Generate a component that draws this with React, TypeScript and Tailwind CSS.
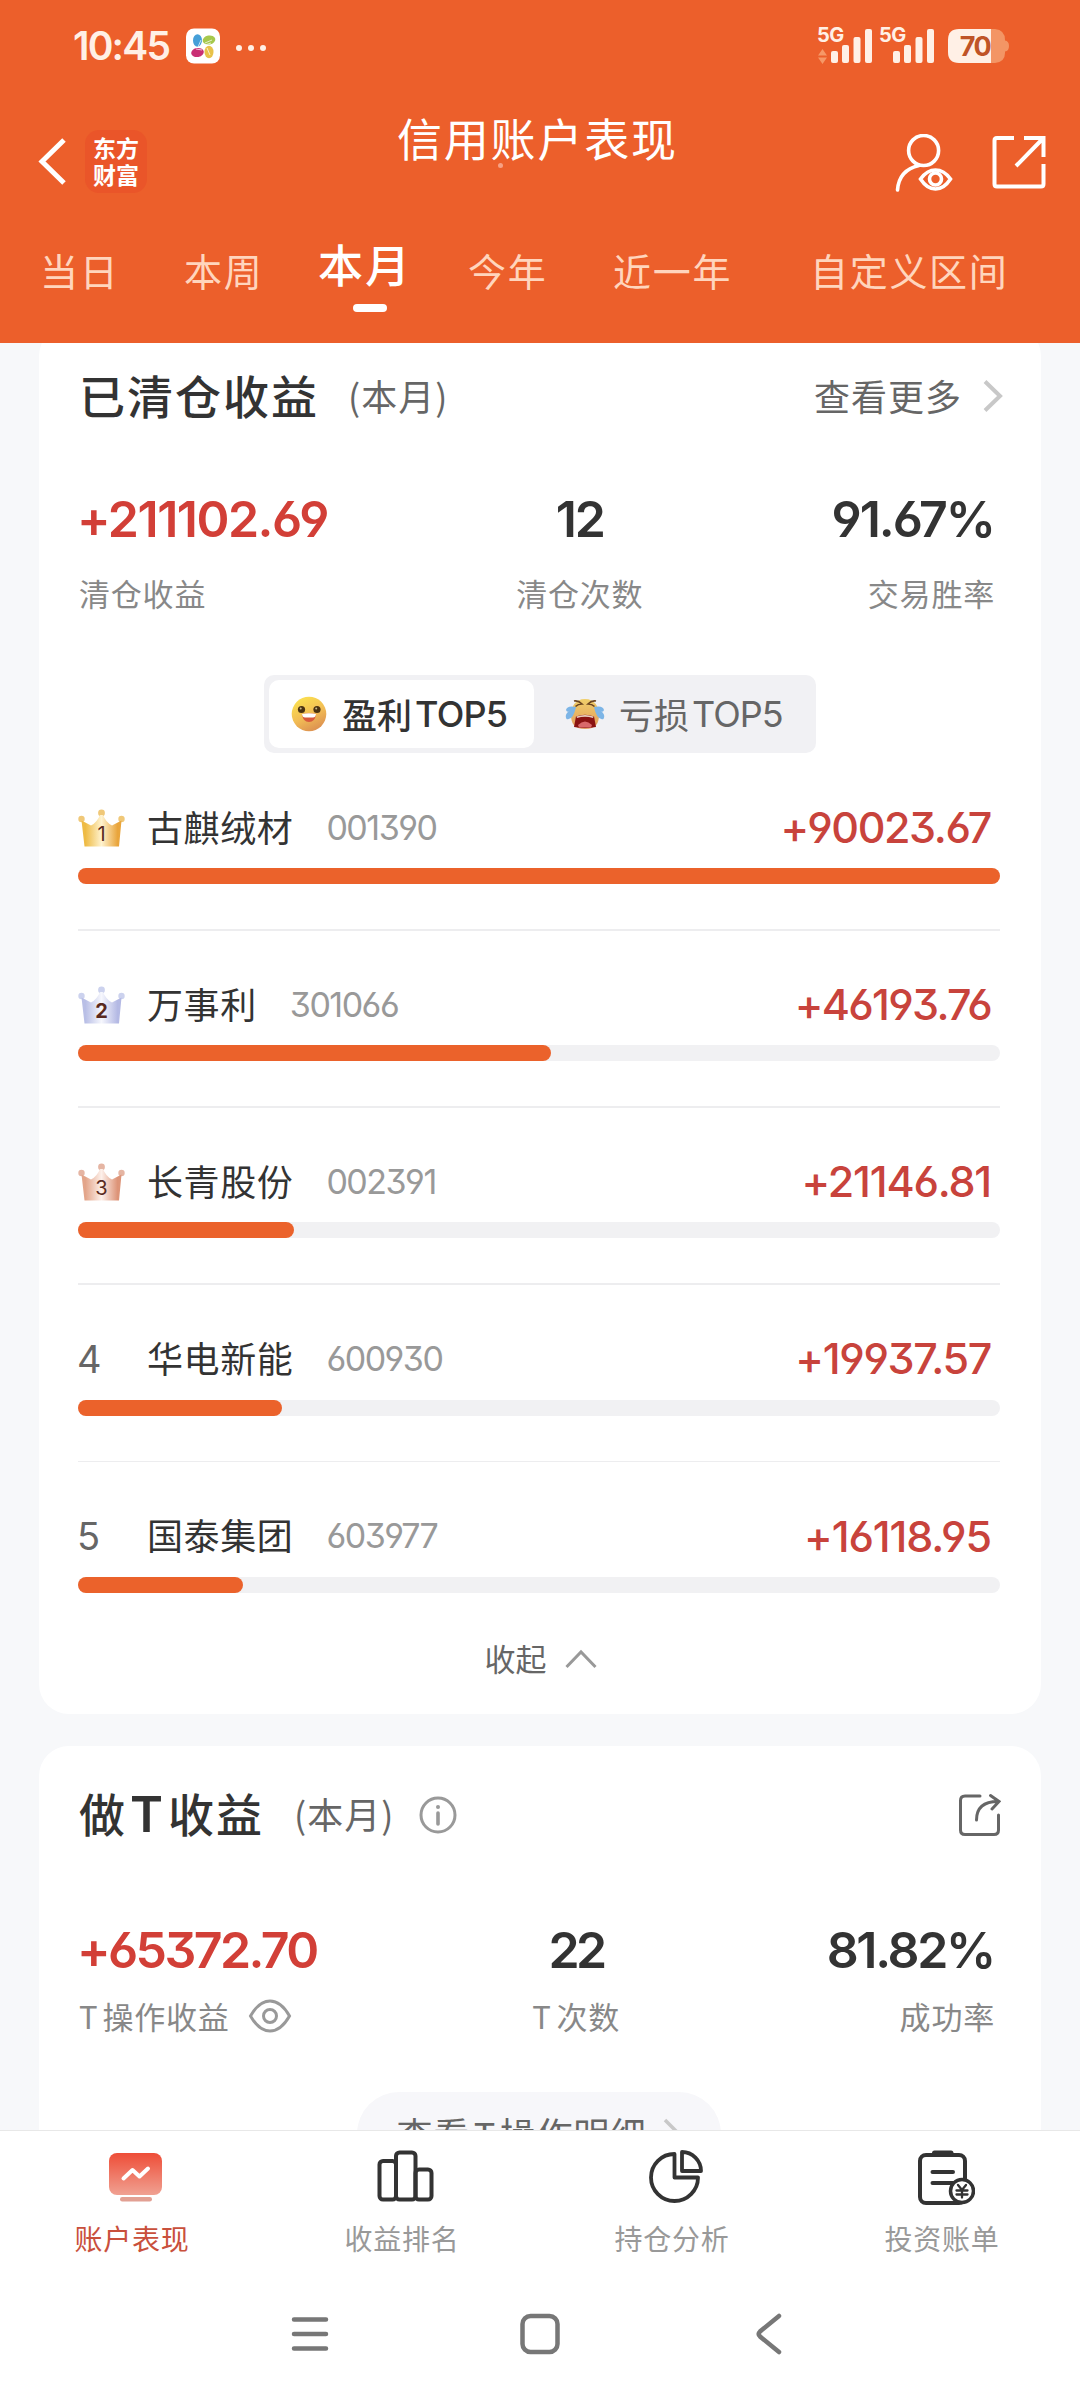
import React, { useState } from 'react'

type Holding = {
  rank: number
  name: string
  code: string
  amount: string
  width: number
  spacing: string
}

const tabs = [
  { label: '当日', className: 'w-[144px]' },
  { label: '本周', className: 'w-[134px]' },
  { label: '本月', className: 'w-[150px]' },
  { label: '今年', className: 'w-[145px]' },
  { label: '近一年', className: 'w-[197px]' },
  { label: '自定义区间', className: '' },
]

const holdings: Holding[] = [
  { rank: 1, name: '古麒绒材', code: '001390', amount: '+90023.67', width: 922, spacing: 'tracking-[-1.4px]' },
  { rank: 2, name: '万事利', code: '301066', amount: '+46193.76', width: 473, spacing: 'tracking-[-1.7px]' },
  { rank: 3, name: '长青股份', code: '002391', amount: '+21146.81', width: 216, spacing: 'tracking-[-1.2px]' },
  { rank: 4, name: '华电新能', code: '600930', amount: '+19937.57', width: 204, spacing: 'tracking-[-1.3px]' },
  { rank: 5, name: '国泰集团', code: '603977', amount: '+16118.95', width: 165, spacing: 'tracking-[-1.1px]' },
]

const crownColors: Record<number, string[]> = {
  1: ['#eebb45', '#fff3cf', '#e9a53c', '#f0c878'],
  2: ['#b9bfe6', '#f6f7fd', '#b4b9e4', '#ccd2ee'],
  3: ['#e3a58a', '#fdf0ea', '#dd9478', '#e5b5a3'],
}

const Crown = ({ rank }: { rank: number }) => {
  const c = crownColors[rank]
  return (
    <svg className="relative top-px" width="47" height="38" viewBox="0 0 47 38">
      <defs>
        <linearGradient id={`crown${rank}`} x1="0" x2="1" y1="0" y2="0">
          <stop offset="0.1" stopColor={c[0]} />
          <stop offset="0.5" stopColor={c[1]} />
          <stop offset="0.9" stopColor={c[2]} />
        </linearGradient>
      </defs>
      <circle cx="3.5" cy="10" r="3.2" fill={c[3]} />
      <circle cx="23.5" cy="4" r="3.4" fill={c[3]} />
      <circle cx="43.5" cy="10" r="3.2" fill={c[3]} />
      <path d="M3.5 11.500 L13 16.500 Q19 13.500 22 6 H25 Q28 13.500 34 16.500 L43.500 11.500 L41 37.500 H6.5 Z" fill={`url(#crown${rank})`} />
      <text
        x="23.5"
        y="31.5"
        textAnchor="middle"
        fontSize="20"
        fontFamily="Inter, sans-serif"
        fontWeight={rank === 2 ? 700 : 400}
        fill="#5a2a20"
      >
        {rank}
      </text>
    </svg>
  )
}

const HappyFace = () => (
  <svg width="36" height="36" viewBox="0 0 36 36">
    <defs>
      <linearGradient id="happy" x1="0.3" y1="0" x2="0.8" y2="1">
        <stop offset="0" stopColor="#fbe04f" />
        <stop offset="0.5" stopColor="#f2bd55" />
        <stop offset="1" stopColor="#d98a50" />
      </linearGradient>
    </defs>
    <circle cx="18" cy="18" r="17.3" fill="url(#happy)" />
    <circle cx="10.5" cy="13.5" r="3.6" fill="#4a3211" />
    <circle cx="26" cy="13.5" r="3.6" fill="#4a3211" />
    <circle cx="9.7" cy="12.5" r="1" fill="#c9b98a" />
    <circle cx="25.2" cy="12.5" r="1" fill="#c9b98a" />
    <path d="M11 18 Q18 16.500 25 18 Q24 26 18 26 Q12 26 11 18Z" fill="#d8583c" />
    <path d="M11 18 Q18 16.500 25 18 Q24.500 21.500 22 21.500 H14 Q11.500 21.500 11 18Z" fill="#fff" />
  </svg>
)

const CryFace = () => (
  <svg width="40" height="34" viewBox="0 0 40 34">
    <defs>
      <linearGradient id="cry" x1="0" y1="0" x2="0" y2="1">
        <stop offset="0" stopColor="#f0cf6a" />
        <stop offset="1" stopColor="#e29a5c" />
      </linearGradient>
    </defs>
    <path d="M20 2 C30 2 34 10 34 18 C34 26 31 32 20 32 C9 32 6 26 6 18 C6 10 10 2 20 2Z" fill="url(#cry)" />
    <path d="M11 19.500 Q20 16 29 19.500 L31 30 Q20 32 9 30Z" fill="#8a1212" />
    <path d="M13 28 Q20 21 27 28 L26 30.500 H14Z" fill="#d9686a" />
    <path d="M11.500 19.500 Q20 16.500 28.500 19.500 L28 21 Q20 18.500 12 21Z" fill="#e9cfc0" />
    <path d="M9 4 Q13 3 17 7 Q13 7 10.500 9.500 M31 4 Q27 3 23 7 Q27 7 29.500 9.500" fill="none" stroke="#6b4520" strokeWidth="1.700" />
    <path d="M11 10 Q2 8 1 13 Q2 16 5 13.500 Q-1 17 1.500 22 Q8 24 11 10Z" fill="#7db5e6" />
    <path d="M29 10 Q38 8 39 13 Q38 16 35 13.500 Q41 17 38.500 22 Q32 24 29 10Z" fill="#7db5e6" />
  </svg>
)

const SignalBars = () => (
  <svg width="41" height="34" viewBox="0 0 41 34" fill="#fff0e6">
    <rect x="0" y="22" width="7" height="12" rx="2" />
    <rect x="11" y="16" width="7" height="18" rx="2" />
    <rect x="22.500" y="8" width="7" height="26" rx="2" />
    <rect x="34" y="0" width="7" height="34" rx="2" />
  </svg>
)

const StatusBar = () => (
  <div className="flex h-[92px] items-center pl-[73px] pr-[70px]">
    <span className="w-[113px] font-['Inter'] text-[39px] font-semibold tracking-[-1.8px] text-[#fff0e6]">10:45</span>
    <svg width="34" height="36" viewBox="0 0 34 36">
      <rect y="0.500" width="34" height="35" rx="8" fill="#fff" />
      <ellipse cx="11.500" cy="12.500" rx="4.500" ry="6.200" fill="#459fd8" />
      <ellipse cx="23" cy="12" rx="6.400" ry="4.500" transform="rotate(-12 23 12)" fill="#a6c84c" />
      <ellipse cx="11.500" cy="24.500" rx="6.400" ry="4.500" transform="rotate(-12 11.500 24.500)" fill="#c92f74" />
      <ellipse cx="23" cy="24" rx="4.500" ry="6.200" fill="#e8c24a" />
      <path d="M12 19 L15 12 M14 19 L16.500 14 M19 15 L26 12 M19 17 L25 15 M10 21 L16 22 M21 20 L24 27" stroke="#fff" strokeWidth="0.700" />
    </svg>
    <div className="ml-[16px] mt-1 flex gap-[6px]">
      <i className="size-[6px] rounded-full bg-[#fff0e6]" />
      <i className="size-[6px] rounded-full bg-[#fff0e6]" />
      <i className="size-[6px] rounded-full bg-[#fff0e6]" />
    </div>
    <div className="ml-auto flex h-[37px] font-['Inter'] text-[20px] font-bold leading-[18px] text-[#fff0e6]">
      <div className="relative mr-2 flex w-[54px] items-end justify-end pb-[2px]">
        <span className="absolute left-[-1px] top-[-2px] tracking-[-0.5px]">5G</span>
        <svg className="absolute bottom-px left-0" width="9" height="15" viewBox="0 0 9 15" fill="#f69867">
          <path d="M4.500 0 L9 6.500 H0Z M4.500 15 L9 8.500 H0Z" />
        </svg>
        <SignalBars />
      </div>
      <div className="relative flex w-[54px] items-end justify-end pb-[2px]">
        <span className="absolute left-[-1px] top-[-2px] tracking-[-0.5px]">5G</span>
        <SignalBars />
      </div>
      <svg className="ml-[14px] mt-[1px]" width="62" height="34" viewBox="0 0 62 34">
        <path d="M43 0 H47 Q57 1 57 11 V11.500 Q61 12 61 17 Q61 22 57 22.500 V24 Q57 33 47 34 H43Z" fill="#f39565" />
        <path d="M11 0 H43 V34 H11 Q0 34 0 23 V11 Q0 0 11 0Z" fill="#fff0e6" />
        <text x="27" y="26.500" textAnchor="middle" fontSize="27" fontWeight="700" letterSpacing="-1.500" fontFamily="Inter, sans-serif" fill="#bf5427">
          70
        </text>
      </svg>
    </div>
  </div>
)

const TitleBar = () => (
  <div className="flex h-[136px] pl-[38px] pr-[34px]">
    <svg className="mt-[46px]" width="29" height="47" viewBox="0 0 29 47" fill="none" stroke="#fff" strokeWidth="5">
      <path d="M26 2 L4 23.500 L26 45" />
    </svg>
    <div className="ml-[18px] mt-[38px] flex h-[63px] w-[62px] shrink-0 flex-col items-center justify-center rounded-[14px] bg-[#ea5529] pb-[2px] text-[23px] font-bold leading-[27px] text-white">
      <span>东方</span>
      <span>财富</span>
    </div>
    <div className="relative ml-[250px] mt-[10px] w-[300px] shrink-0 text-[45px] leading-[72px] tracking-[1.8px] text-white">
      信用账户表现
      <i className="absolute left-[101px] top-[61px] size-[5px] rounded-full bg-[#f7a184]" />
    </div>
    <svg className="ml-auto mt-[42px]" width="60" height="60" viewBox="0 0 60 60" fill="none" stroke="#fff" strokeWidth="3.600" strokeLinecap="round">
      <circle cx="29.600" cy="16.500" r="15" />
      <path d="M25 31.500 Q5 36 3.500 56" />
      <path d="M26.500 45 Q33 36 41.500 36 Q50 36 56.500 45 Q50 55 41.500 55 Q33 55 26.500 45Z" />
      <circle cx="41.500" cy="45" r="6" />
    </svg>
    <svg className="ml-[38px] mt-[43px]" width="54" height="54" viewBox="0 0 54 54" fill="none" stroke="#fff" strokeWidth="4">
      <path d="M22 3 H5 Q2.500 3 2.500 5.500 V49 Q2.500 51.500 5 51.500 H49 Q51.500 51.500 51.500 49 V29 M32 3 H51.500 V22 M51 3.500 L24 31" />
    </svg>
  </div>
)

const PeriodTabs = ({ active, onChange }: { active: string; onChange: (label: string) => void }) => (
  <div className="flex h-[114px] pl-[40px]">
    {tabs.map((tab) => (
      <button key={tab.label} className={`relative flex h-[90px] items-start text-left ${tab.className}`} onClick={() => onChange(tab.label)}>
        {active === tab.label ? (
          <span className="flex h-[71px] items-center whitespace-nowrap text-[45px] font-medium tracking-[2px] text-white">
            {tab.label}
            <i className="absolute left-[35px] top-[76px] h-[8px] w-[34px] rounded-full bg-white" />
          </span>
        ) : (
          <span className="flex h-[83px] items-center whitespace-nowrap text-[38px] tracking-[1.7px] text-[#ffd5bd]">{tab.label}</span>
        )}
      </button>
    ))}
  </div>
)

const Stat = ({ value, label, align, red, gap, spacing, children }: any) => (
  <div className={`flex flex-col ${align}`}>
    <span
      className={`whitespace-nowrap font-['Inter'] text-[50px] font-semibold leading-[60px] [font-feature-settings:'cv03','cv04','cv09'] ${spacing} ${red ? 'text-[#d23f37]' : 'text-[#333]'}`}
    >
      {value}
    </span>
    <span className={`flex items-center text-[31px] leading-[40px] tracking-[0.8px] text-[#888] ${gap}`}>
      {label}
      {children}
    </span>
  </div>
)

const HoldingRow = ({ item }: { item: Holding }) => (
  <div className="h-[177.2px]">
    <div className="flex h-[66px] items-center pr-[9px]">
      <div className="w-[69px]">
        {item.rank <= 3 ? <Crown rank={item.rank} /> : <span className="-ml-px font-['Inter'] text-[38px] leading-none text-[#666]">{item.rank}</span>}
      </div>
      <span className="pb-[3px] text-[36px] tracking-[0.6px] text-[#333]">{item.name}</span>
      <span className="ml-[33px] font-['Inter'] text-[34px] tracking-[-1.5px] text-[#999] [font-feature-settings:'cv03','cv04','cv09']">{item.code}</span>
      <span className={`ml-auto font-['Inter'] text-[43px] font-medium text-[#c8433c] [font-feature-settings:'cv03','cv04','cv09'] ${item.spacing}`}>
        {item.amount}
      </span>
    </div>
    <div className="mt-[8px] h-[16px] rounded-full bg-[#f1f1f3]">
      <div className="h-full rounded-full bg-[#eb622b]" style={{ width: item.width }} />
    </div>
    {item.rank < 5 && <div className="mt-[45px] h-[1.5px] bg-[#ededef]" />}
  </div>
)

const ClearedCard = () => {
  const [side, setSide] = useState('win')

  return (
    <div className="-mt-[17px] h-[1388px] rounded-[30px] bg-white pl-[39px] pr-[41px] pt-[34px]">
      <div className="flex h-[72px] items-center">
        <h2 className="ml-px pb-[4px] text-[46px] font-medium tracking-[2px] text-[#333]">已清仓收益</h2>
        <span className="ml-[29px] pb-[3px] text-[36px] tracking-[1px] text-[#666]">(本月)</span>
        <span className="ml-auto pb-[3px] text-[36px] tracking-[1px] text-[#666]">查看更多</span>
        <svg className="ml-[20px] mr-[-4px]" width="22" height="34" viewBox="0 0 22 34" fill="none" stroke="#c8c8c8" strokeWidth="4">
          <path d="M3 2.500 L18 17 L3 31.500" />
        </svg>
      </div>
      <div className="mt-[57px] flex justify-between pl-px pr-[5px]">
        <Stat value="+211102.69" label="清仓收益" align="items-start" red gap="mt-[24px]" spacing="-ml-[2px] tracking-[-1.5px]" />
        <Stat value="12" label="清仓次数" align="items-center" gap="mt-[24px]" spacing="tracking-[-2.2px]" />
        <Stat value="91.67%" label="交易胜率" align="items-end" gap="mt-[24px]" spacing="mr-[1px] tracking-[-2px]" />
      </div>
      <div className="mx-auto mt-[62px] flex h-[78px] w-[552px] translate-x-px rounded-[10px] bg-[#f1f1f4] p-[5px] text-[35px] text-[#666]">
        <button
          className={side === 'win' ? 'flex w-[265px] items-center rounded-[10px] bg-white pl-[22px] font-medium text-[#333]' : 'flex w-[265px] items-center pl-[22px]'}
          onClick={() => setSide('win')}
        >
          <HappyFace />
          <span className="ml-[15px]">盈利</span>
          <span className="ml-[3px] font-['Inter'] text-[36px] tracking-[-0.8px]">TOP5</span>
        </button>
        <button className="flex items-center pl-[31px]" onClick={() => setSide('loss')}>
          <CryFace />
          <span className="ml-[14px]">亏损</span>
          <span className="ml-[3px] font-['Inter'] text-[36px] tracking-[-1px]">TOP5</span>
        </button>
      </div>
      <div className="mt-[41px] h-[827px]">
        {holdings.map((item) => (
          <HoldingRow key={item.rank} item={item} />
        ))}
      </div>
      <button className="mx-auto flex h-[76px] translate-x-[2px] items-center text-[31px] text-[#666]">
        <span className="pb-[2px]">收起</span>
        <svg className="ml-[17px]" width="34" height="20" viewBox="0 0 34 20" fill="none" stroke="#999" strokeWidth="3">
          <path d="M2.500 18 L17 3 L31.500 18" />
        </svg>
      </button>
    </div>
  )
}

const TradeCard = () => (
  <div className="mt-[32px] h-[460px] rounded-t-[30px] bg-white pl-[39px] pr-[41px] pt-[33px]">
    <div className="flex h-[72px] items-center">
      <h2 className="ml-px pb-[6px] text-[46px] font-medium tracking-[2px] text-[#333]">
        做<span className="mx-[3px] font-['Inter'] text-[50px] font-semibold leading-none">T</span>收益
      </h2>
      <span className="ml-[30px] pb-[5px] text-[36px] tracking-[1px] text-[#666]">(本月)</span>
      <svg className="ml-[24px]" width="40" height="40" viewBox="0 0 40 40" fill="none" stroke="#999" strokeWidth="3">
        <circle cx="20" cy="20" r="17" />
        <path d="M20 18 V29" strokeWidth="3.600" strokeLinecap="round" />
        <circle cx="20" cy="12" r="2" fill="#999" stroke="none" />
      </svg>
      <svg className="ml-auto mr-[-1px]" width="43" height="44" viewBox="0 0 43 44" fill="none" stroke="#666" strokeWidth="3" strokeLinecap="round">
        <path d="M22 3 H7 Q2.500 3 2.500 7.500 V37 Q2.500 41.500 7 41.500 H36 Q40.500 41.500 40.500 37 V22 M18.500 27 Q18.500 8.500 40 8.500 M32.500 2.500 L41 8.500 L34 16" />
      </svg>
    </div>
    <div className="mt-[69px] flex justify-between pl-px pr-[5px]">
      <Stat value="+65372.70" label={<span>T<span className="ml-[4px]">操作收益</span></span>} align="items-start" red gap="mt-[16px]" spacing="-ml-[2px] tracking-[-2.6px]">
        <svg className="ml-[18px]" width="44" height="34" viewBox="0 0 44 34" fill="none" stroke="#999" strokeWidth="3">
          <path d="M2.500 17 Q11 2 22 2 Q33 2 41.500 17 Q33 32 22 32 Q11 32 2.500 17Z" />
          <circle cx="22" cy="17" r="6.500" />
        </svg>
      </Stat>
      <Stat value="22" label={<span>T<span className="ml-[5px]">次数</span></span>} align="items-center ml-[9px]" gap="mt-[16px]" spacing="tracking-[-3.5px]" />
      <Stat value="81.82%" label="成功率" align="items-end" gap="mt-[16px]" spacing="mr-[1px] tracking-[-2.3px]" />
    </div>
    <div className="mx-auto mt-[56px] flex h-[84px] w-[364px] items-center justify-center rounded-full bg-[#f7f7fa] pb-[2px] text-[36px] text-[#666]">
      <span className="tracking-[0.6px]">
        查看<span className="mx-[4px]">T</span>操作明细
      </span>
      <svg className="ml-[17px]" width="18" height="30" viewBox="0 0 18 30" fill="none" stroke="#c8c8c8" strokeWidth="3.500">
        <path d="M2 2 L15 15 L2 28" />
      </svg>
    </div>
  </div>
)

const AccountIcon = () => (
  <svg width="60" height="60" viewBox="0 0 60 60">
    <defs>
      <linearGradient id="account" x1="0" y1="0" x2="0" y2="1">
        <stop offset="0" stopColor="#ee4d37" />
        <stop offset="1" stopColor="#f0a192" />
      </linearGradient>
    </defs>
    <rect x="4" y="6" width="53" height="42" rx="8" fill="url(#account)" />
    <path d="M18.500 31.500 L27.500 23 L34.500 29.500 L43 21.500" fill="none" stroke="#fff" strokeWidth="4" strokeLinecap="round" strokeLinejoin="round" />
    <rect x="15" y="50" width="32" height="4.500" rx="2.200" fill="#e2a093" />
  </svg>
)

const RankIcon = () => (
  <svg width="60" height="60" viewBox="0 0 60 60" fill="none" stroke="#333" strokeWidth="4">
    <rect x="4.500" y="14" width="16.500" height="38.500" rx="3.500" />
    <rect x="21" y="5.500" width="19.500" height="47" rx="3.500" />
    <rect x="40.500" y="22.500" width="16" height="30" rx="3.500" />
  </svg>
)

const PieIcon = () => (
  <svg width="60" height="60" viewBox="0 0 60 60" fill="none" stroke="#333" strokeWidth="3.800" strokeLinejoin="round">
    <path d="M29.500 7 A23.500 23.500 0 1 0 53 30.500 H29.500Z" />
    <path d="M37 5 A19 19 0 0 1 56 24 H37Z" />
  </svg>
)

const BillIcon = () => (
  <svg width="60" height="60" viewBox="0 0 60 60" fill="none" stroke="#333" strokeWidth="4" strokeLinecap="round">
    <rect x="5" y="8" width="45" height="48" rx="6" />
    <path d="M19.500 6 H36" strokeWidth="5" />
    <path d="M17.500 25 H38 M17.500 36 H38" />
    <circle cx="47" cy="44" r="11.500" fill="#fff" strokeWidth="3.500" />
    <path d="M43 38 L47 43 L51 38 M47 43 V50.500 M41.500 43.500 H52.500 M41.500 47.500 H52.500" strokeWidth="2.300" />
  </svg>
)

const navItems = [
  { label: '账户表现', icon: <AccountIcon />, className: 'text-[#c9503c]' },
  { label: '收益排名', icon: <RankIcon />, className: 'text-[#999]' },
  { label: '持仓分析', icon: <PieIcon />, className: 'text-[#999]' },
  { label: '投资账单', icon: <BillIcon />, className: 'text-[#999]' },
]

function App() {
  const [period, setPeriod] = useState('本月')

  return (
    <div className="flex h-[2400px] w-[1080px] flex-col overflow-hidden bg-[#f7f8fa] font-['Noto_Sans_CJK_SC',sans-serif]">
      <header className="z-10 h-[343px] shrink-0 bg-[#ec5f2b]">
        <StatusBar />
        <TitleBar />
        <PeriodTabs active={period} onChange={setPeriod} />
      </header>
      <main className="h-[1787px] shrink-0 overflow-hidden px-[39px]">
        <ClearedCard />
        <TradeCard />
      </main>
      <nav className="flex h-[270px] shrink-0 flex-col border-t border-[#e8e8e8] bg-white">
        <div className="flex h-[132px]">
          {navItems.map((item) => (
            <button key={item.label} className={`flex flex-1 flex-col items-center pt-[16px] text-[28px] leading-[36px] ${item.className}`}>
              {item.icon}
              <span className="mt-[13px] mr-[6px] tracking-[0.7px]">{item.label}</span>
            </button>
          ))}
        </div>
        <div className="flex h-[138px] items-center pl-[290px] pt-[5px]">
          <svg width="40" height="40" viewBox="0 0 40 40" stroke="#777" strokeWidth="4.500" strokeLinecap="round">
            <path d="M4 5.500 H36 M4 20 H36 M4 34.500 H36" />
          </svg>
          <svg className="ml-[189px]" width="42" height="42" viewBox="0 0 42 42" fill="none" stroke="#777" strokeWidth="4.500">
            <rect x="3.500" y="3" width="35" height="36" rx="8" />
          </svg>
          <svg className="ml-[194px]" width="28" height="42" viewBox="0 0 28 42" fill="none" stroke="#777" strokeWidth="4.500" strokeLinecap="round">
            <path d="M24 3 L5 18.500 Q2.500 21 5 23.500 L24 39" />
          </svg>
        </div>
      </nav>
    </div>
  )
}

export default App
